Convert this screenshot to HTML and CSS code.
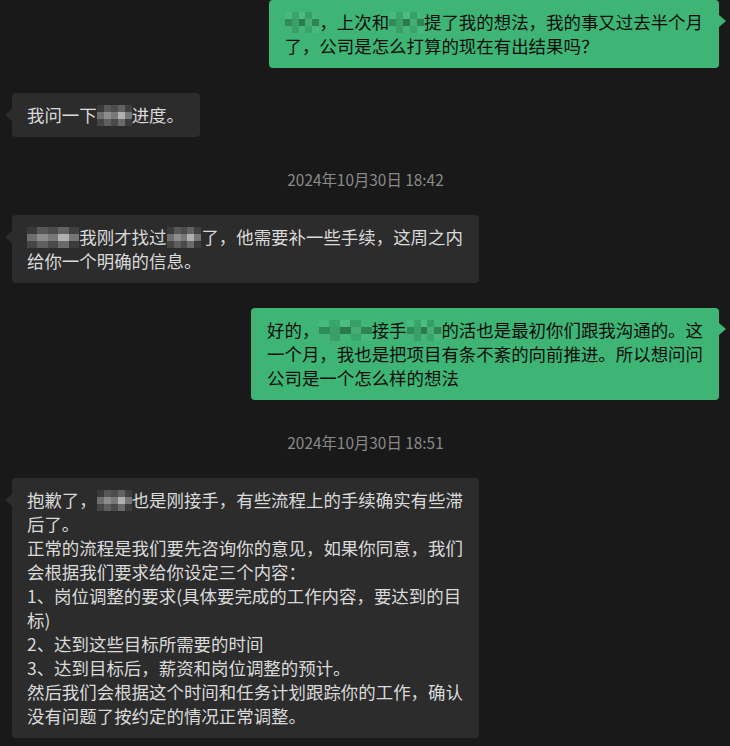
FILE: index.html
```html
<!DOCTYPE html>
<html lang="zh-CN">
<head>
<meta charset="utf-8">
<title>Chat</title>
<link rel="stylesheet" href="styles.css">
</head>
<body>
<div class="chat">
  <div class="row right">
    <div class="bubble green"><span class="mz g w2"></span>，上次和<span class="mz g w2"></span>提了我的想法，我的事又过去半个月<br>了，公司是怎么打算的现在有出结果吗？</div>
  </div>
  <div class="row left">
    <div class="bubble dark">我问一下<span class="mz d w2"></span>进度。</div>
  </div>
  <div class="time">2024年10月30日 18:42</div>
  <div class="row left">
    <div class="bubble dark"><span class="mz d w3"></span>我刚才找过<span class="mz d w2"></span>了，他需要补一些手续，这周之内<br>给你一个明确的信息。</div>
  </div>
  <div class="row right">
    <div class="bubble green">好的，<span class="mz g w3"></span>接手<span class="mz g w2"></span>的活也是最初你们跟我沟通的。这<br>一个月，我也是把项目有条不紊的向前推进。所以想问问<br>公司是一个怎么样的想法</div>
  </div>
  <div class="time">2024年10月30日 18:51</div>
  <div class="row left">
    <div class="bubble dark">抱歉了，<span class="mz d w2"></span>也是刚接手，有些流程上的手续确实有些滞<br>后了。<br>正常的流程是我们要先咨询你的意见，如果你同意，我们<br>会根据我们要求给你设定三个内容：<br>1、岗位调整的要求(具体要完成的工作内容，要达到的目<br>标)<br>2、达到这些目标所需要的时间<br>3、达到目标后，薪资和岗位调整的预计。<br>然后我们会根据这个时间和任务计划跟踪你的工作，确认<br>没有问题了按约定的情况正常调整。</div>
  </div>
</div>
</body>
</html>
```

FILE: styles.css
```css
html, body {
  margin: 0;
  padding: 0;
  background: #191919;
}
body {
  width: 730px;
  height: 746px;
  overflow: hidden;
  font-family: "Noto Sans CJK SC", "Noto Sans", sans-serif;
}
.chat {
  display: flex;
  flex-direction: column;
  padding: 0 11px 0 12px;
}
.row {
  display: flex;
  margin-top: 25px;
}
.row:first-child {
  margin-top: 0;
}
.row.left { justify-content: flex-start; }
.row.right { justify-content: flex-end; }
.bubble {
  position: relative;
  font-size: 17.44px;
  line-height: 24px;
  padding: 10px 16px 10px 15px;
  border-radius: 4px;
  white-space: nowrap;
}
.bubble.dark {
  background: #2c2c2c;
  color: #dadada;
}
.bubble.green {
  background: #3eb575;
  color: #0c0c0c;
  padding: 10px 16px 10px 16px;
}
.bubble.dark::before {
  content: "";
  position: absolute;
  left: -7px;
  top: 16px;
  border-top: 6px solid transparent;
  border-bottom: 6px solid transparent;
  border-right: 7px solid #2c2c2c;
}
.bubble.green::after {
  content: "";
  position: absolute;
  right: -7px;
  top: 15px;
  border-top: 6px solid transparent;
  border-bottom: 6px solid transparent;
  border-left: 7px solid #3eb575;
}
.time {
  margin-top: 30px;
  text-align: center;
  font-size: 15.4px;
  line-height: 24px;
  color: #8a8a8a;
}
.time + .row {
  margin-top: 24px;
}
.mz {
  display: inline-block;
  position: relative;
  height: 21px;
  vertical-align: -4px;
}
.mz.w2 { width: 2em; }
.mz.w3 { width: 3em; }
.mz::before, .mz::after {
  content: "";
  position: absolute;
  left: 0;
  right: 0;
  height: 7px;
}
.mz::before { top: 7px; }
.mz::after { top: 14px; }
.mz.d {
  background: linear-gradient(90deg, #3a3a3a 0 20%, #585858 20% 40%, #4c4c4c 40% 60%, #626262 60% 80%, #404040 80% 100%) top / 100% 7px no-repeat;
}
.mz.d::before {
  background: linear-gradient(90deg, #6e6e6e 0 20%, #8c8c8c 20% 40%, #787878 40% 60%, #b0b0b0 60% 80%, #767676 80% 100%);
}
.mz.d::after {
  background: linear-gradient(90deg, #454545 0 20%, #5e5e5e 20% 40%, #4a4a4a 40% 60%, #6a6a6a 60% 80%, #3c3c3c 80% 100%);
}
.mz.g {
  background: linear-gradient(90deg, #48bb7c 0 20%, #3aa56a 20% 40%, #4cbd80 40% 60%, #36a066 60% 80%, #44b678 80% 100%) top / 100% 7px no-repeat;
}
.mz.g::before {
  background: linear-gradient(90deg, #2f8c59 0 20%, #3a9f66 20% 40%, #2a7a4f 40% 60%, #43ad72 60% 80%, #2f8454 80% 100%);
}
.mz.g::after {
  background: linear-gradient(90deg, #42b276 0 20%, #399f66 20% 40%, #45b478 40% 60%, #3aa56a 60% 80%, #48b97c 80% 100%);
}
```
